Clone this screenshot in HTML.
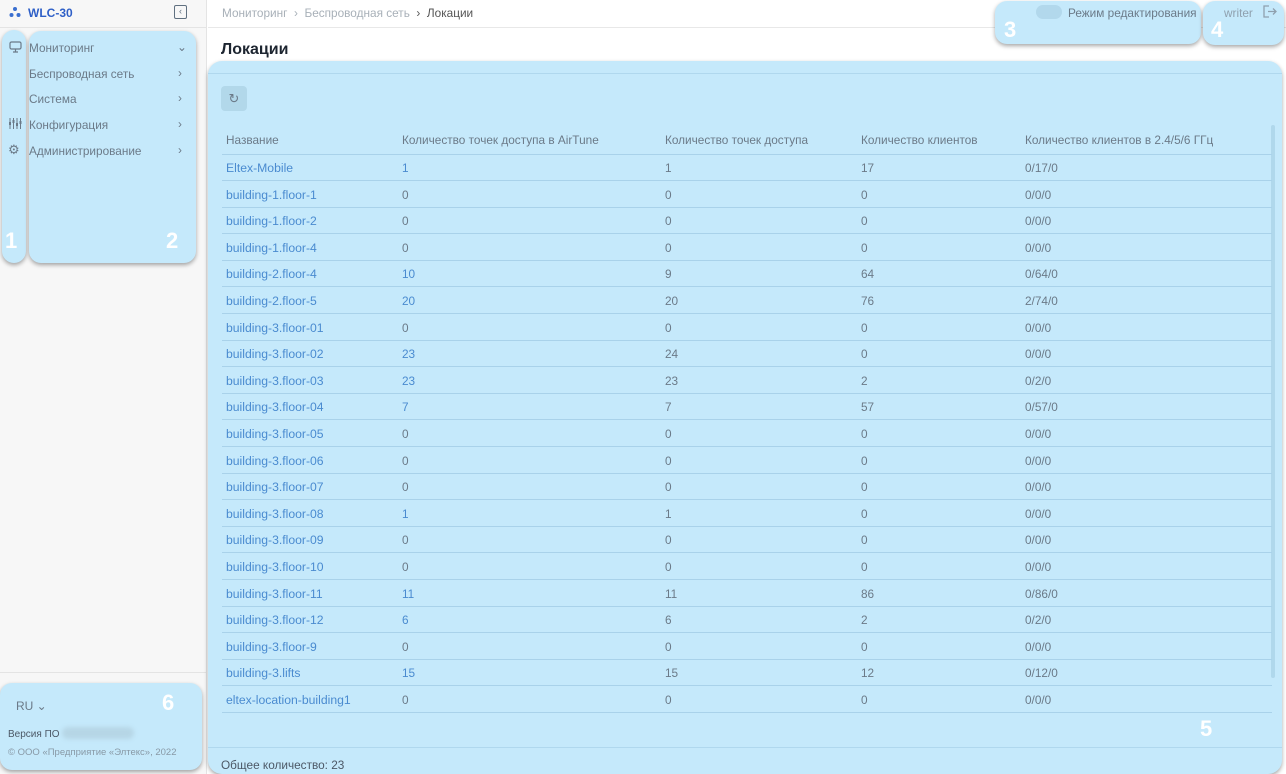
<!DOCTYPE html>
<html><head><meta charset="utf-8"><style>
*{box-sizing:border-box;margin:0;padding:0}
body{width:1286px;height:774px;overflow:hidden;background:#fff;font-family:"Liberation Sans","DejaVu Sans",sans-serif;font-size:11.8px;color:#6b7a88;position:relative}
.sb{position:absolute;left:0;top:0;width:207px;height:774px;background:#f7f7f7;border-right:1px solid #e4e4e4}
.hl{position:absolute;background:#c5e9fb;border-radius:12px;box-shadow:0 2px 4px rgba(0,0,0,.35)}
.num{position:absolute;color:#fff;font-weight:bold;font-size:22px}
.a{position:absolute;white-space:nowrap}
.link{color:#4a8bd0;font-size:12.2px}
.row{position:absolute;left:222px;width:1050px;height:1px;background:#a9d2ea}
</style></head><body>
<div class="sb"></div>
<div style="position:absolute;left:0;top:27px;width:207px;height:1px;background:#e4e4e4"></div>
<div style="position:absolute;left:208px;top:27px;width:1078px;height:1px;background:#e8e8e8"></div>
<div style="position:absolute;left:0;top:672px;width:207px;height:1px;background:#e4e4e4"></div>
<svg class="a" style="left:9px;top:6px" width="12" height="12" viewBox="0 0 12 12"><g fill="#3a6fd0"><circle cx="6" cy="3" r="2"/><circle cx="2.5" cy="9" r="2"/><circle cx="9.5" cy="9" r="2"/></g></svg>
<div class="a" style="left:28px;top:6px;color:#2e5fc7;font-weight:bold;font-size:12px">WLC-30</div>
<div class="a" style="left:174px;top:5px;width:13px;height:14px;border:1.5px solid #607080;border-radius:2px;font-size:9px;line-height:10px;text-align:center;color:#607080">‹</div>

<div class="hl" style="left:2px;top:30px;width:24px;height:233px"></div>
<div class="hl" style="left:29px;top:31px;width:167px;height:232px"></div>
<div class="num" style="left:5px;top:228px">1</div>
<div class="num" style="left:166px;top:228px">2</div>
<svg class="a" style="left:9px;top:41px" width="13" height="12" viewBox="0 0 13 12"><rect x="1" y="1" width="11" height="7" rx="1.5" fill="none" stroke="#6b7a88" stroke-width="1.2"/><path d="M6.5 8v3M4 11h5" stroke="#6b7a88" stroke-width="1.2"/></svg>
<svg class="a" style="left:8px;top:117px" width="14" height="13" viewBox="0 0 14 13"><path d="M2 1v11M5.5 1v11M9 1v11M12.5 1v11" stroke="#6b7a88" stroke-width="1"/><rect x="1" y="5" width="2" height="3" fill="#6b7a88"/><rect x="4.5" y="3" width="2" height="3" fill="#6b7a88"/><rect x="8" y="6" width="2" height="3" fill="#6b7a88"/><rect x="11.5" y="4" width="2" height="3" fill="#6b7a88"/></svg>
<div class="a" style="left:8px;top:142px;font-size:13px;color:#6b7a88">⚙</div>
<div class="a" style="left:29px;top:41px">Мониторинг</div><div class="a" style="left:177px;top:40px">⌄</div>
<div class="a" style="left:29px;top:67px">Беспроводная сеть</div><div class="a" style="left:178px;top:66px">›</div>
<div class="a" style="left:29px;top:92px">Система</div><div class="a" style="left:178px;top:91px">›</div>
<div class="a" style="left:29px;top:118px">Конфигурация</div><div class="a" style="left:178px;top:117px">›</div>
<div class="a" style="left:29px;top:144px">Администрирование</div><div class="a" style="left:178px;top:143px">›</div>

<div class="hl" style="left:0;top:683px;width:202px;height:87px"></div>
<div class="num" style="left:162px;top:690px">6</div>
<div class="a" style="left:16px;top:699px;font-size:12px">RU ⌄</div>
<div class="a" style="left:8px;top:729px;font-size:10px;color:#4c5866">Версия ПО</div>
<div class="a" style="left:62px;top:727px;width:72px;height:12px;background:#b6d6e6;border-radius:6px;filter:blur(2px)"></div>
<div class="a" style="left:8px;top:747px;font-size:9.5px;color:#8899a6">© ООО «Предприятие «Элтекс», 2022</div>

<div class="a" style="left:222px;top:6px;color:#a8b0b8">Мониторинг &nbsp;›&nbsp; Беспроводная сеть &nbsp;<span style="color:#555">›&nbsp; Локации</span></div>
<div class="hl" style="left:995px;top:1px;width:206px;height:43px"></div>
<div class="hl" style="left:1203px;top:1px;width:81px;height:44px"></div>
<div class="num" style="left:1004px;top:17px">3</div>
<div class="num" style="left:1211px;top:17px">4</div>
<div class="a" style="left:1036px;top:5px;width:26px;height:14px;border-radius:7px;background:#b2d8ec"></div>
<div class="a" style="left:1068px;top:6px">Режим редактирования</div>
<div class="a" style="left:1224px;top:6px;color:#8fa0ae">writer</div>
<svg class="a" style="left:1262px;top:4px" width="16" height="15" viewBox="0 0 16 15"><path d="M7 2H2v11h5M6 7.5h8M11 4.5l3 3-3 3" fill="none" stroke="#8fa0ae" stroke-width="1.3"/></svg>

<div class="a" style="left:221px;top:41px;font-size:16px;color:#1d2530;font-weight:bold">Локации</div>
<div class="hl" style="left:208px;top:61px;width:1074px;height:713px;border-radius:14px"></div>
<div style="position:absolute;left:208px;top:73px;width:1074px;height:1px;background:#b0d8ee"></div>
<div style="position:absolute;left:208px;top:747px;width:1074px;height:1px;background:#b0d8ee"></div>
<div class="a" style="left:221px;top:86px;width:26px;height:25px;border-radius:4px;background:#b2d8ea;text-align:center;line-height:25px;font-size:13px;color:#6b7a88">↻</div>
<div class="a" style="left:1271px;top:125px;width:4px;height:553px;background:#b0d8ec;border-radius:2px"></div>

<div class="a" style="left:226px;top:133px">Название</div>
<div class="a" style="left:402px;top:133px">Количество точек доступа в AirTune</div>
<div class="a" style="left:665px;top:133px">Количество точек доступа</div>
<div class="a" style="left:861px;top:133px">Количество клиентов</div>
<div class="a" style="left:1025px;top:133px">Количество клиентов в 2.4/5/6 ГГц</div>
<div class="row" style="top:154px"></div>

<div id="rows"></div>
<div class="a" style="left:221px;top:758px;color:#4c5866">Общее количество: 23</div>
<script>
var d=[["Eltex-Mobile",1,1,17,"0/17/0"],["building-1.floor-1",0,0,0,"0/0/0"],["building-1.floor-2",0,0,0,"0/0/0"],["building-1.floor-4",0,0,0,"0/0/0"],["building-2.floor-4",10,9,64,"0/64/0"],["building-2.floor-5",20,20,76,"2/74/0"],["building-3.floor-01",0,0,0,"0/0/0"],["building-3.floor-02",23,24,0,"0/0/0"],["building-3.floor-03",23,23,2,"0/2/0"],["building-3.floor-04",7,7,57,"0/57/0"],["building-3.floor-05",0,0,0,"0/0/0"],["building-3.floor-06",0,0,0,"0/0/0"],["building-3.floor-07",0,0,0,"0/0/0"],["building-3.floor-08",1,1,0,"0/0/0"],["building-3.floor-09",0,0,0,"0/0/0"],["building-3.floor-10",0,0,0,"0/0/0"],["building-3.floor-11",11,11,86,"0/86/0"],["building-3.floor-12",6,6,2,"0/2/0"],["building-3.floor-9",0,0,0,"0/0/0"],["building-3.lifts",15,15,12,"0/12/0"],["eltex-location-building1",0,0,0,"0/0/0"]];
var h="";d.forEach(function(r,i){var y=161+i*26.6;
h+='<div class="a link" style="left:226px;top:'+y+'px">'+r[0]+'</div><div class="a" style="left:402px;top:'+y+'px;color:'+(r[1]?'#4a8bd0':'#6b7a88')+'">'+r[1]+'</div><div class="a" style="left:665px;top:'+y+'px">'+r[2]+'</div><div class="a" style="left:861px;top:'+y+'px">'+r[3]+'</div><div class="a" style="left:1025px;top:'+y+'px">'+r[4]+'</div><div class="row" style="top:'+(y+19)+'px"></div>';});
document.getElementById("rows").innerHTML=h;
</script>
<div class="num" style="left:1200px;top:716px">5</div>
</body></html>
